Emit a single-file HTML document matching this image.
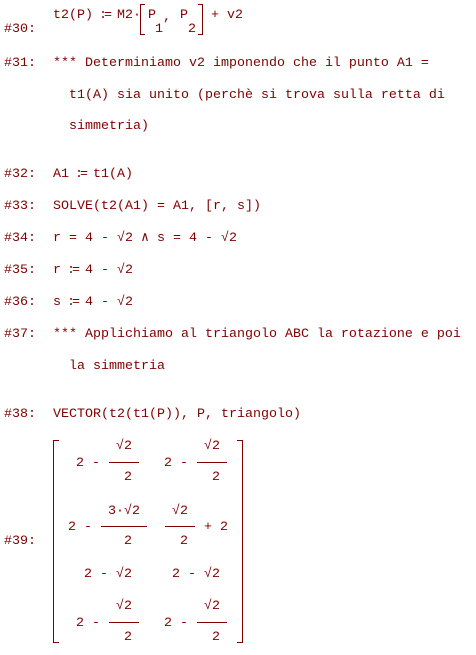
<!DOCTYPE html><html><head><style>
body{margin:0;width:476px;height:655px;background:#fff;overflow:hidden;position:relative}
.t{position:absolute;white-space:pre;font-family:"Liberation Mono",monospace;font-size:13.33px;line-height:16px;color:#800000;margin-top:2px}
.h{position:absolute;background:#800000;height:1px}
.v{position:absolute;background:#800000;width:1px}
.ce{display:inline-block;width:8px;letter-spacing:-3px;text-indent:-2px}
</style></head><body>
<div class="t" style="left:4px;top:20px">#30:</div>
<div class="t" style="left:53px;top:6px">t2(P) <span class="ce">:=</span> M2·</div>
<div class="v" style="left:140px;top:4px;height:31px"></div><div class="h" style="left:140px;top:4px;width:5px"></div><div class="h" style="left:140px;top:34px;width:5px"></div>
<div class="t" style="left:148px;top:6px">P</div><div class="t" style="left:163px;top:8px">,</div><div class="t" style="left:180px;top:6px">P</div>
<div class="t" style="left:155px;top:20px">1</div><div class="t" style="left:188px;top:20px">2</div>
<div class="v" style="left:202px;top:4px;height:31px"></div><div class="h" style="left:198px;top:4px;width:5px"></div><div class="h" style="left:198px;top:34px;width:5px"></div>
<div class="t" style="left:211px;top:6px">+ v2</div>

<div class="t" style="left:4px;top:54px">#31:</div>
<div class="t" style="left:53px;top:54px">*** Determiniamo v2 imponendo che il punto A1 =</div>
<div class="t" style="left:69px;top:86px">t1(A) sia unito (perchè si trova sulla retta di</div>
<div class="t" style="left:69px;top:117px">simmetria)</div>
<div class="t" style="left:4px;top:165px">#32:</div><div class="t" style="left:53px;top:165px">A1 <span class="ce">:=</span> t1(A)</div>
<div class="t" style="left:4px;top:197px">#33:</div><div class="t" style="left:53px;top:197px">SOLVE(t2(A1) = A1, [r, s])</div>
<div class="t" style="left:4px;top:229px">#34:</div><div class="t" style="left:53px;top:229px">r = 4 - √2 ∧ s = 4 - √2</div>
<div class="t" style="left:4px;top:261px">#35:</div><div class="t" style="left:53px;top:261px">r <span class="ce">:=</span> 4 - √2</div>
<div class="t" style="left:4px;top:293px">#36:</div><div class="t" style="left:53px;top:293px">s <span class="ce">:=</span> 4 - √2</div>
<div class="t" style="left:4px;top:325px">#37:</div><div class="t" style="left:53px;top:325px">*** Applichiamo al triangolo ABC la rotazione e poi</div>
<div class="t" style="left:69px;top:357px">la simmetria</div>
<div class="t" style="left:4px;top:405px">#38:</div><div class="t" style="left:53px;top:405px">VECTOR(t2(t1(P)), P, triangolo)</div>
<div class="t" style="left:4px;top:532px">#39:</div>

<div class="v" style="left:53px;top:440px;height:203px"></div><div class="h" style="left:53px;top:440px;width:6px"></div><div class="h" style="left:53px;top:642px;width:6px"></div>
<div class="v" style="left:242px;top:440px;height:203px"></div><div class="h" style="left:237px;top:440px;width:6px"></div><div class="h" style="left:237px;top:642px;width:6px"></div>

<div class="t" style="left:76px;top:454px">2 -</div><div class="h" style="left:109px;top:462px;width:30px"></div>
<div class="t" style="left:116px;top:437px">√2</div><div class="t" style="left:124px;top:468px">2</div>
<div class="t" style="left:164px;top:454px">2 -</div><div class="h" style="left:197px;top:462px;width:30px"></div>
<div class="t" style="left:204px;top:437px">√2</div><div class="t" style="left:212px;top:468px">2</div>

<div class="t" style="left:68px;top:518px">2 -</div><div class="h" style="left:101px;top:526px;width:46px"></div>
<div class="t" style="left:108px;top:502px">3·√2</div><div class="t" style="left:124px;top:532px">2</div>
<div class="h" style="left:165px;top:526px;width:30px"></div>
<div class="t" style="left:172px;top:502px">√2</div><div class="t" style="left:180px;top:532px">2</div>
<div class="t" style="left:204px;top:518px">+ 2</div>

<div class="t" style="left:84px;top:565px">2 - √2</div><div class="t" style="left:172px;top:565px">2 - √2</div>

<div class="t" style="left:76px;top:614px">2 -</div><div class="h" style="left:109px;top:622px;width:30px"></div>
<div class="t" style="left:116px;top:597px">√2</div><div class="t" style="left:124px;top:628px">2</div>
<div class="t" style="left:164px;top:614px">2 -</div><div class="h" style="left:197px;top:622px;width:30px"></div>
<div class="t" style="left:204px;top:597px">√2</div><div class="t" style="left:212px;top:628px">2</div>
</body></html>
